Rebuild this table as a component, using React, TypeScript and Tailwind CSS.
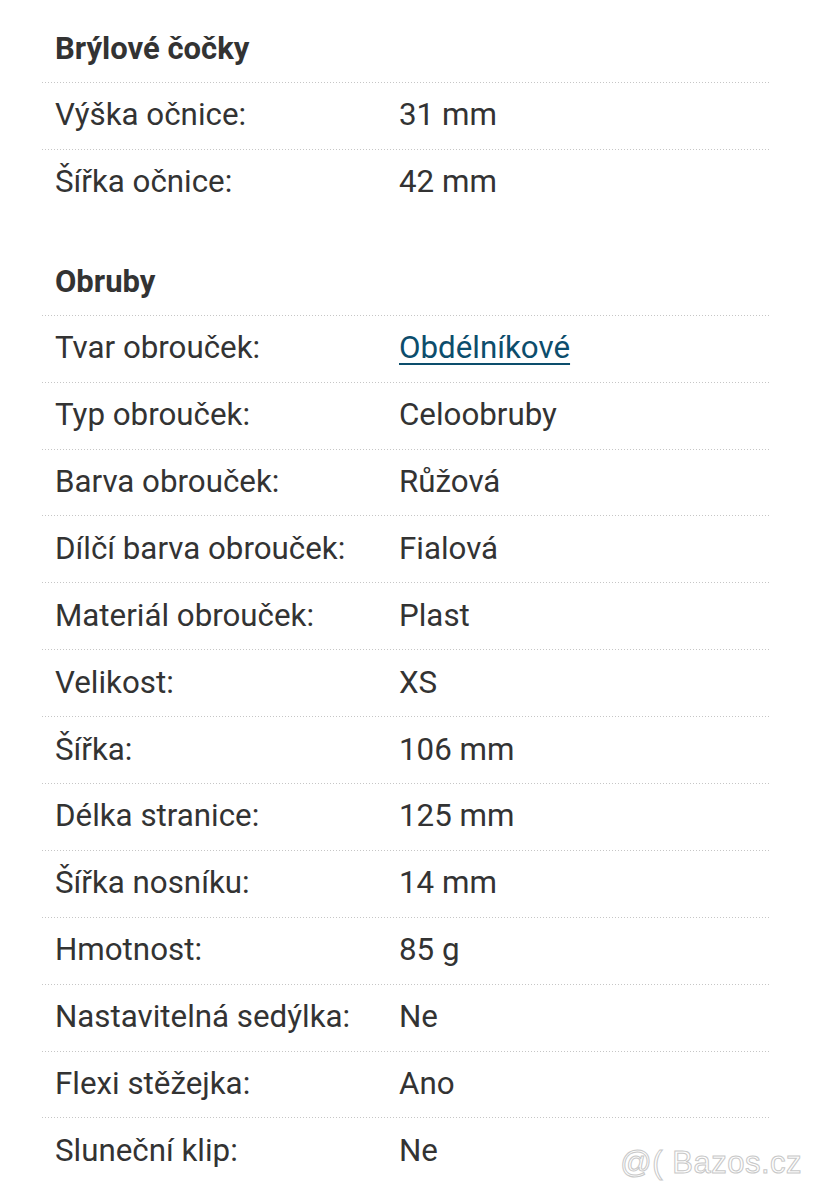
import React from "react";

type Row = { label: string; value: string; link?: boolean };

const lenses: Row[] = [
  { label: "Výška očnice:", value: "31 mm" },
  { label: "Šířka očnice:", value: "42 mm" },
];

const frames: Row[] = [
  { label: "Tvar obrouček:", value: "Obdélníkové", link: true },
  { label: "Typ obrouček:", value: "Celoobruby" },
  { label: "Barva obrouček:", value: "Růžová" },
  { label: "Dílčí barva obrouček:", value: "Fialová" },
  { label: "Materiál obrouček:", value: "Plast" },
  { label: "Velikost:", value: "XS" },
  { label: "Šířka:", value: "106 mm" },
  { label: "Délka stranice:", value: "125 mm" },
  { label: "Šířka nosníku:", value: "14 mm" },
  { label: "Hmotnost:", value: "85 g" },
  { label: "Nastavitelná sedýlka:", value: "Ne" },
  { label: "Flexi stěžejka:", value: "Ano" },
  { label: "Sluneční klip:", value: "Ne" },
];

function Sep() {
  return (
    <div className="h-px w-full bg-[repeating-linear-gradient(to_right,#c6c6c6_0px,#c6c6c6_1px,transparent_1px,transparent_3px)]" />
  );
}

function Section({ title, rows }: { title: string; rows: Row[] }) {
  return (
    <div className="flex flex-col">
      <div className="h-[66px] flex items-center pl-[13px] text-[31px] font-bold text-[#333333]">
        {title}
      </div>
      <Sep />
      {rows.map((r, i) => (
        <div key={r.label} className="flex flex-col">
          <div className="h-[65.9px] flex items-center text-[31.3px] text-[#333333]">
            <div className="w-[357px] pl-[13px] shrink-0">{r.label}</div>
            <div>
              {r.link ? (
                <a href="#" className="text-[#0c4d6c] underline underline-offset-[5px] decoration-[2px]">
                  {r.value}
                </a>
              ) : (
                r.value
              )}
            </div>
          </div>
          {i < rows.length - 1 && <Sep />}
        </div>
      ))}
    </div>
  );
}

export default function App() {
  return (
    <div
      className="relative w-[815px] h-[1200px] bg-white overflow-hidden"
      style={{ fontFamily: "Roboto, 'Noto Sans', sans-serif" }}
    >
      <div className="ml-[42px] w-[729px] pt-[16px] flex flex-col gap-[33px]">
        <Section title="Brýlové čočky" rows={lenses} />
        <Section title="Obruby" rows={frames} />
      </div>
      <div
        className="absolute right-[13px] bottom-[14px] text-[31px] text-transparent [-webkit-text-stroke:1px_#c8c8c8] tracking-[0.5px]"
        style={{ fontFamily: "'Liberation Sans', Arial, sans-serif" }}
      >
        @( Bazos.cz
      </div>
    </div>
  );
}
